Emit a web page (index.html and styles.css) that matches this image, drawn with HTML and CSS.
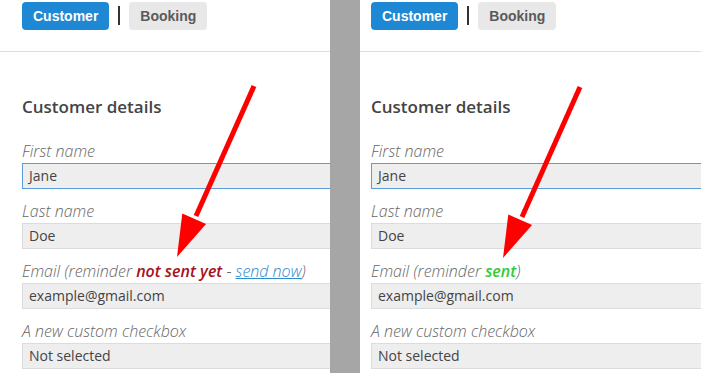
FILE: index.html
```html
<!DOCTYPE html>
<html lang="en">
<head>
    <meta charset="UTF-8">
    <title>Reminder status</title>
    <link rel="stylesheet" href="styles.css">
</head>
<body>
    <!-- Before: reminder not sent -->
    <div class="panel panel-left">
        <div class="tabs">
            <button class="tab tab-active">Customer</button>
            <span class="tab-sep"></span>
            <button class="tab">Booking</button>
        </div>
        <div class="details">
            <h2>Customer details</h2>
            <div class="field">
                <label>First name</label>
                <div class="input input-focus">Jane</div>
            </div>
            <div class="field">
                <label>Last name</label>
                <div class="input">Doe</div>
            </div>
            <div class="field">
                <label>Email (reminder <b class="not-sent">not sent yet</b> - <a href="#">send now</a>)</label>
                <div class="input">example@gmail.com</div>
            </div>
            <div class="field">
                <label>A new custom checkbox</label>
                <div class="input">Not selected</div>
            </div>
        </div>
        <svg class="arrow" width="100" height="185" viewBox="0 0 100 185">
            <line x1="84" y1="6" x2="26" y2="136" stroke="#ff0000" stroke-width="5"/>
            <polygon points="7,177 12.3,133.4 36.1,144" fill="#ff0000"/>
        </svg>
    </div>

    <div class="divider"></div>

    <!-- After: reminder sent -->
    <div class="panel panel-right">
        <div class="tabs">
            <button class="tab tab-active">Customer</button>
            <span class="tab-sep"></span>
            <button class="tab">Booking</button>
        </div>
        <div class="details">
            <h2>Customer details</h2>
            <div class="field">
                <label>First name</label>
                <div class="input input-focus">Jane</div>
            </div>
            <div class="field">
                <label>Last name</label>
                <div class="input">Doe</div>
            </div>
            <div class="field">
                <label>Email (reminder <b class="sent">sent</b>)</label>
                <div class="input">example@gmail.com</div>
            </div>
            <div class="field">
                <label>A new custom checkbox</label>
                <div class="input">Not selected</div>
            </div>
        </div>
        <svg class="arrow" width="100" height="185" viewBox="0 0 100 185">
            <line x1="84" y1="6" x2="26" y2="136" stroke="#ff0000" stroke-width="5"/>
            <polygon points="7,177 12.3,133.4 36.1,144" fill="#ff0000"/>
        </svg>
    </div>
</body>
</html>
```

FILE: styles.css
```css
body {
    margin: 0;
    display: flex;
    height: 373px;
    overflow: hidden;
    background: #fff;
    font-family: "Open Sans", sans-serif;
}
.panel {
    position: relative;
    overflow: hidden;
}
.panel-left {
    width: 330px;
    flex: none;
}
.panel-right {
    flex: 1;
}
.divider {
    width: 30px;
    flex: none;
    background: #a6a6a6;
}
.tabs {
    display: flex;
    align-items: flex-start;
    height: 49px;
    padding-top: 2px;
    border-bottom: 1px solid #dddddd;
}
.panel-left .tabs {
    padding-left: 22px;
}
.panel-right .tabs {
    padding-left: 11px;
}
.tab {
    height: 28px;
    padding: 0 11px;
    border: none;
    border-radius: 4px;
    background: #e8e8e8;
    color: #5a5a5a;
    font-family: "Liberation Sans", Arial, sans-serif;
    font-weight: bold;
    font-size: 14px;
}
.tab-active {
    background: #1f88d4;
    color: #fff;
}
.tab-sep {
    width: 2px;
    height: 19px;
    margin: 4px 9px 0 9px;
    background: #333;
}
.details {
    padding-top: 43px;
}
.panel-left .details {
    padding-left: 22px;
}
.panel-right .details {
    padding-left: 11px;
}
h2 {
    margin: 0 0 21px 0;
    font-size: 17px;
    font-weight: 600;
    line-height: 24px;
    color: #444;
}
.field {
    margin-bottom: 11px;
}
label {
    display: block;
    margin-bottom: 1px;
    font-size: 16px;
    font-style: italic;
    font-weight: 300;
    line-height: 22px;
    color: #666;
    white-space: nowrap;
}
.not-sent {
    font-weight: 600;
    color: #a5121c;
}
.sent {
    font-weight: 600;
    color: #33cc33;
}
a {
    color: #2a8bd0;
    text-decoration: underline;
}
.input {
    box-sizing: border-box;
    width: 420px;
    height: 26px;
    padding: 0 6px;
    border: 1px solid #dcdcdc;
    background: #eeeeee;
    font-size: 14px;
    line-height: 24px;
    color: #444;
}
.input-focus {
    border-color: #5b9dd9;
}
.arrow {
    position: absolute;
    top: 80px;
}
.panel-left .arrow {
    left: 170px;
}
.panel-right .arrow {
    left: 136px;
    top: 81px;
}
```
